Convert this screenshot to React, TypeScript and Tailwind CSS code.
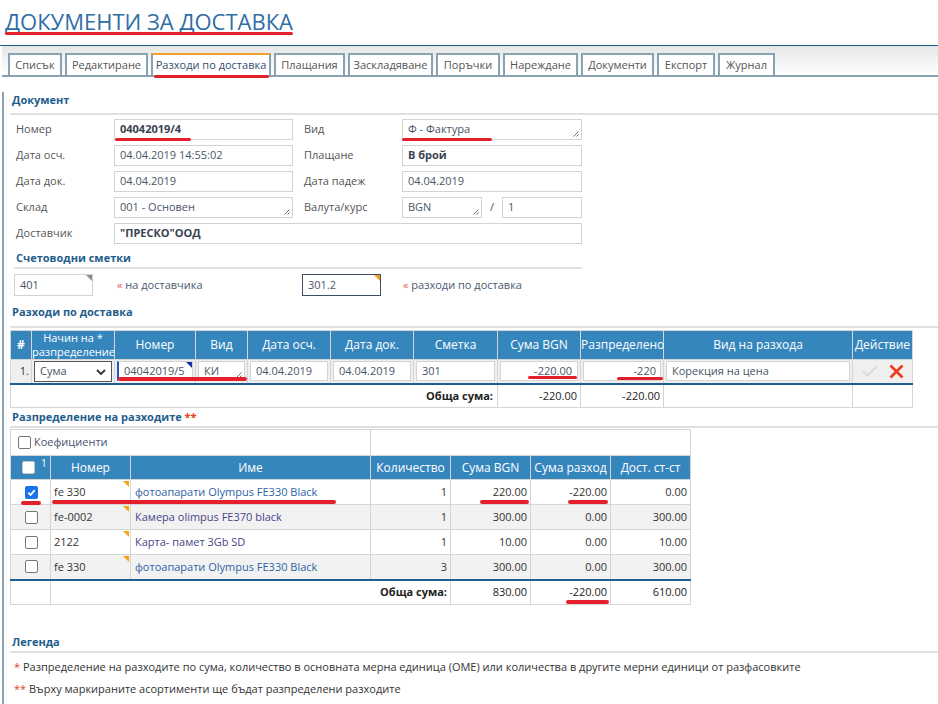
import React from 'react';
import clsx from 'clsx';
import { twMerge } from 'tailwind-merge';

const cx = (...a: (string | false | undefined)[]) => twMerge(clsx(a));

const Grip = () => (
  <svg className="absolute bottom-[2px] right-[2px]" width="7" height="7" viewBox="0 0 7 7">
    <path d="M6.5 1.5L1.5 6.5M6.5 4.5L4.5 6.5" stroke="#6b6b6b" strokeWidth="1" />
  </svg>
);

const Corner = ({ className }: { className: string }) => (
  <span
    className={cx(
      'absolute right-0 top-0 h-0 w-0 border-l-[6px] border-t-[6px] border-l-transparent',
      className,
    )}
  />
);

type FieldProps = {
  children?: React.ReactNode;
  className?: string;
  bold?: boolean;
  grip?: boolean;
  right?: boolean;
  corner?: string;
};

const Field = ({ children, className, bold, grip, right, corner }: FieldProps) => (
  <div
    className={cx(
      'relative flex h-[21px] items-center whitespace-nowrap border border-[#d3d3d3] bg-white px-[5px] text-[#4a5568]',
      right && 'justify-end',
      bold && 'font-bold text-[#3a4250]',
      className,
    )}
  >
    {children}
    {grip && <Grip />}
    {corner && <Corner className={corner} />}
  </div>
);

const Heading = ({ children, className }: { children: React.ReactNode; className?: string }) => (
  <div
    className={cx(
      'border-b-2 border-[#e0e0e0] pl-[2px] text-[11px] font-bold leading-[16px] text-[#1f5d8c]',
      className,
    )}
  >
    {children}
  </div>
);

const Label = ({ children }: { children: React.ReactNode }) => (
  <div className="w-[98px] shrink-0 text-[#555]">{children}</div>
);

const Box = ({ checked = false }: { checked?: boolean }) =>
  checked ? (
    <span className="inline-flex h-[13px] w-[13px] shrink-0 items-center justify-center rounded-[2px] bg-[#1a73e8]">
      <svg width="9" height="9" viewBox="0 0 10 10">
        <path d="M1.5 5.2L4 7.7L8.6 2.4" stroke="white" strokeWidth="1.9" fill="none" />
      </svg>
    </span>
  ) : (
    <span className="inline-block h-[13px] w-[13px] shrink-0 rounded-[2px] border border-[#767676] bg-white" />
  );

const tabs: [string, string][] = [
  ['Списък', 'w-[54px]'],
  ['Редактиране', 'w-[83px]'],
  ['Разходи по доставка', 'w-[120px]'],
  ['Плащания', 'w-[71px]'],
  ['Заскладяване', 'w-[85px]'],
  ['Поръчки', 'w-[64px]'],
  ['Нареждане', 'w-[75px]'],
  ['Документи', 'w-[73px]'],
  ['Експорт', 'w-[58px]'],
  ['Журнал', 'w-[57px]'],
];

const th = 'border border-[#d5d5d5] bg-[#3686be] p-0 text-center text-[12px] font-normal text-white';
const td = 'border border-[#d5d5d5] p-0';

const items = [
  { c: true, n: 'fe 330', name: 'фотоапарати Olympus FE330 Black', q: '1', s: '220.00', r: '-220.00', d: '0.00', link: 'text-[#2f62a6]' },
  { c: false, n: 'fe-0002', name: 'Камера olimpus FE370 black', q: '1', s: '300.00', r: '0.00', d: '300.00', link: 'text-[#46458a]' },
  { c: false, n: '2122', name: 'Карта- памет 3Gb SD', q: '1', s: '10.00', r: '0.00', d: '10.00', link: 'text-[#4a4586]' },
  { c: false, n: 'fe 330', name: 'фотоапарати Olympus FE330 Black', q: '3', s: '300.00', r: '0.00', d: '300.00', link: 'text-[#2f62a6]' },
];

export default function App() {
  return (
    <div className="relative h-[704px] w-[938px] overflow-hidden bg-white font-['Open_Sans',sans-serif] text-[11px] text-[#444]">
      <div className="h-[46px] border-b border-[#1d5d8b] pl-[5px] pt-[6px]">
        <h1 className="text-[22px] leading-[31px] text-[#2f6ea5]">ДОКУМЕНТИ ЗА ДОСТАВКА</h1>
      </div>

      <div className="ml-[2px]">
        <div className="flex items-end gap-[3px] border-b-2 border-[#8aa3b2] bg-linear-to-b from-[#e6e6e6] to-white pl-[6px] pt-[7px]">
          {tabs.map(([t, w], i) => (
            <div
              key={t}
              className={cx(
                'flex h-[22px] items-center justify-center whitespace-nowrap border-2 border-b-0 border-[#8aa3b2] bg-white text-[#555]',
                w,
                i === 2 && 'border-t-[#f0a02c] text-[#34506e]',
              )}
            >
              {t}
            </div>
          ))}
        </div>

        <div className="border-l-2 border-[#8aa3b2] pb-[20px]">
          <Heading className="ml-[6px] mt-[15px] pb-[5px]">Документ</Heading>

          <div className="mt-[4px] flex flex-col gap-[5px] pl-[12px]">
            <div className="flex h-[21px] items-center">
              <Label>Номер</Label>
              <Field bold className="w-[179px]">04042019/4</Field>
              <div className="w-[11px]" />
              <Label>Вид</Label>
              <Field grip className="w-[180px]">Ф - Фактура</Field>
            </div>
            <div className="flex h-[21px] items-center">
              <Label>Дата осч.</Label>
              <Field className="w-[179px]">04.04.2019 14:55:02</Field>
              <div className="w-[11px]" />
              <Label>Плащане</Label>
              <Field bold className="w-[180px]">В брой</Field>
            </div>
            <div className="flex h-[21px] items-center">
              <Label>Дата док.</Label>
              <Field className="w-[179px]">04.04.2019</Field>
              <div className="w-[11px]" />
              <Label>Дата падеж</Label>
              <Field className="w-[180px]">04.04.2019</Field>
            </div>
            <div className="flex h-[21px] items-center">
              <Label>Склад</Label>
              <Field grip className="w-[179px]">001 - Основен</Field>
              <div className="w-[11px]" />
              <Label>Валута/курс</Label>
              <Field grip className="w-[80px]">BGN</Field>
              <span className="w-[20px] pl-[8px] text-[#555]">/</span>
              <Field className="w-[80px]">1</Field>
            </div>
            <div className="flex h-[21px] items-center">
              <Label>Доставчик</Label>
              <Field bold className="w-[468px]">"ПРЕСКО"ООД</Field>
            </div>
          </div>

          <Heading className="ml-[10px] mt-[6px] w-[568px] pb-[1px]">Счетоводни сметки</Heading>

          <div className="ml-[10px] mt-[5px] flex h-[22px] items-center">
            <Field corner="border-t-[#8c8c8c]" className="h-[22px] w-[79px]">401</Field>
            <span className="ml-[24px] w-[185px] text-[#4a5a70]">
              <span className="text-[#e05a5a]">«</span> на доставчика
            </span>
            <Field corner="border-t-[#f2a225]" className="h-[22px] w-[79px] border-[#3f4f63]">301.2</Field>
            <span className="ml-[22px] text-[#4a5a70]">
              <span className="text-[#e05a5a]">«</span> разходи по доставка
            </span>
          </div>

          <Heading className="ml-[6px] mt-[8px] pb-[6px]">Разходи по доставка</Heading>

          <table className="ml-[6px] mt-[2px] w-[902px] table-fixed border-collapse">
            <colgroup>
              <col className="w-[21px]" />
              <col className="w-[83px]" />
              <col className="w-[81px]" />
              <col className="w-[52px]" />
              <col className="w-[83px]" />
              <col className="w-[83px]" />
              <col className="w-[84px]" />
              <col className="w-[83px]" />
              <col className="w-[83px]" />
              <col className="w-[189px]" />
              <col className="w-[60px]" />
            </colgroup>
            <thead>
              <tr className="h-[28px]">
                <th className={cx(th, 'font-bold')}>#</th>
                <th className={cx(th, 'whitespace-nowrap text-[11px] leading-[14px]')}>
                  <div>Начин на *</div>
                  <div>разпределение</div>
                </th>
                <th className={th}>Номер</th>
                <th className={th}>Вид</th>
                <th className={th}>Дата осч.</th>
                <th className={th}>Дата док.</th>
                <th className={th}>Сметка</th>
                <th className={th}>Сума BGN</th>
                <th className={cx(th, 'whitespace-nowrap')}>Разпределено</th>
                <th className={th}>Вид на разхода</th>
                <th className={th}>Действие</th>
              </tr>
            </thead>
            <tbody>
              <tr className="h-[24px] bg-[#efefef]">
                <td className={cx(td, 'pr-[2px] text-right text-[#333]')}>1.</td>
                <td className={cx(td, 'px-[2px]')}>
                  <div className="relative flex h-[21px] items-center border border-[#555] bg-white pl-[5px] text-[#4a5568]">
                    Сума
                    <svg className="absolute right-[5px] top-[7px]" width="10" height="6" viewBox="0 0 10 6">
                      <path d="M1 1L5 5L9 1" stroke="#333" strokeWidth="1.8" fill="none" />
                    </svg>
                  </div>
                </td>
                <td className={cx(td, 'px-[2px]')}>
                  <Field corner="border-t-[#1b2fa8]" className="h-[20px] border-l-2 border-l-[#2457c5]">
                    04042019/5
                  </Field>
                </td>
                <td className={cx(td, 'px-[2px]')}>
                  <Field grip className="h-[20px]">КИ</Field>
                </td>
                <td className={cx(td, 'px-[2px]')}>
                  <Field className="h-[20px]">04.04.2019</Field>
                </td>
                <td className={cx(td, 'px-[2px]')}>
                  <Field className="h-[20px]">04.04.2019</Field>
                </td>
                <td className={cx(td, 'px-[2px]')}>
                  <Field className="h-[20px]">301</Field>
                </td>
                <td className={cx(td, 'px-[2px]')}>
                  <Field right className="h-[20px]">-220.00</Field>
                </td>
                <td className={cx(td, 'px-[2px]')}>
                  <Field right className="h-[20px] pr-[4px]">-220</Field>
                </td>
                <td className={cx(td, 'px-[2px]')}>
                  <Field className="h-[20px]">Корекция на цена</Field>
                </td>
                <td className={td}>
                  <div className="flex items-center pl-[9px]">
                    <svg width="16" height="12" viewBox="0 0 16 12">
                      <path d="M1 6L5.5 10.5L15 1" stroke="#d6d6d6" strokeWidth="1.6" fill="none" />
                    </svg>
                    <svg className="ml-[11px]" width="15" height="15" viewBox="0 0 15 15">
                      <path d="M1.5 1.5L13.5 13.5M13.5 1.5L1.5 13.5" stroke="#ee3a1c" strokeWidth="2.6" />
                    </svg>
                  </div>
                </td>
              </tr>
              <tr className="h-[24px] bg-white text-[#222]">
                <td colSpan={7} className={cx(td, 'border-t-2 border-t-[#1d5f92] pr-[4px] text-right font-bold')}>
                  Обща сума:
                </td>
                <td className={cx(td, 'border-t-2 border-t-[#1d5f92] pr-[3px] text-right')}>-220.00</td>
                <td className={cx(td, 'border-t-2 border-t-[#1d5f92] pr-[3px] text-right')}>-220.00</td>
                <td className={cx(td, 'border-t-2 border-t-[#1d5f92]')} />
                <td className={cx(td, 'border-t-2 border-t-[#1d5f92]')} />
              </tr>
            </tbody>
          </table>

          <Heading className="ml-[6px] mt-[1px] pb-[1px]">
            Разпределение на разходите <span className="text-[#e8401a]">**</span>
          </Heading>

          <table className="ml-[6px] mt-[1px] w-[680px] table-fixed border-collapse">
            <colgroup>
              <col className="w-[40px]" />
              <col className="w-[80px]" />
              <col className="w-[240px]" />
              <col className="w-[80px]" />
              <col className="w-[80px]" />
              <col className="w-[80px]" />
              <col className="w-[80px]" />
            </colgroup>
            <thead>
              <tr className="h-[26px] bg-white">
                <td colSpan={3} className={cx(td, 'pl-[7px]')}>
                  <div className="flex items-center">
                    <Box />
                    <span className="ml-[3px] text-[#4a5170]">Коефициенти</span>
                  </div>
                </td>
                <td colSpan={4} className={td} />
              </tr>
              <tr className="h-[24px]">
                <th className={th}>
                  <div className="flex items-start pl-[11px]">
                    <span className="inline-block h-[13px] w-[13px] rounded-[2px] border border-[#c8c8c8] bg-white" />
                    <span className="-mt-[3px] ml-[6px] text-[10px] leading-[10px]">1</span>
                  </div>
                </th>
                <th className={th}>Номер</th>
                <th className={th}>Име</th>
                <th className={th}>Количество</th>
                <th className={th}>Сума BGN</th>
                <th className={th}>Сума разход</th>
                <th className={th}>Дост. ст-ст</th>
              </tr>
            </thead>
            <tbody>
              {items.map((it, i) => (
                <tr key={i} className={cx('h-[25px] text-[#333]', i % 2 === 1 ? 'bg-[#f2f2f2]' : 'bg-white')}>
                  <td className={cx(td, 'text-center')}>
                    <div className="flex justify-center pl-[2px]">
                      <Box checked={it.c} />
                    </div>
                  </td>
                  <td className={cx(td, 'relative pl-[3px]')}>
                    {it.n}
                    <span className="absolute right-[1px] top-[1px] h-0 w-0 border-l-[6px] border-t-[6px] border-l-transparent border-t-[#f4a21c]" />
                  </td>
                  <td className={cx(td, 'pl-[4px]', it.link)}>{it.name}</td>
                  <td className={cx(td, 'pr-[3px] text-right')}>{it.q}</td>
                  <td className={cx(td, 'pr-[3px] text-right')}>{it.s}</td>
                  <td className={cx(td, 'pr-[3px] text-right')}>{it.r}</td>
                  <td className={cx(td, 'pr-[3px] text-right')}>{it.d}</td>
                </tr>
              ))}
              <tr className="h-[25px] bg-white text-[#222]">
                <td className={cx(td, 'border-t-2 border-t-[#1d5f92]')} />
                <td colSpan={3} className={cx(td, 'border-t-2 border-t-[#1d5f92] pr-[3px] text-right font-bold')}>
                  Обща сума:
                </td>
                <td className={cx(td, 'border-t-2 border-t-[#1d5f92] pr-[3px] text-right')}>830.00</td>
                <td className={cx(td, 'border-t-2 border-t-[#1d5f92] pr-[3px] text-right')}>-220.00</td>
                <td className={cx(td, 'border-t-2 border-t-[#1d5f92] pr-[3px] text-right')}>610.00</td>
              </tr>
            </tbody>
          </table>

          <Heading className="ml-[6px] mt-[29px] pb-[1px]">Легенда</Heading>
          <div className="mt-[3px] pl-[10px] leading-[22px] text-[#333]">
            <div>
              <span className="text-[#e8401a]">*</span> Разпределение на разходите по сума, количество в основната мерна
              единица (ОМЕ) или количества в другите мерни единици от разфасовките
            </div>
            <div>
              <span className="text-[#e8401a]">**</span> Върху маркираните асортименти ще бъдат разпределени разходите
            </div>
          </div>
        </div>
      </div>

      {/* red annotation marks */}
      <div className="absolute left-[5px] top-[32px] h-[3px] w-[288px] rounded-full bg-[#e3202b]" />
      <div className="absolute left-[154px] top-[75px] h-[3px] w-[115px] rounded-full bg-[#e3202b]" />
      <div className="absolute left-[115px] top-[138px] h-[3px] w-[76px] rounded-full bg-[#e3202b]" />
      <div className="absolute left-[402px] top-[138px] h-[3px] w-[90px] rounded-full bg-[#e3202b]" />
      <div className="absolute left-[118px] top-[377px] h-[4px] w-[129px] rounded-full bg-[#e3202b]" />
      <div className="absolute left-[528px] top-[376px] h-[3px] w-[49px] rounded-full bg-[#e3202b]" />
      <div className="absolute left-[617px] top-[377px] h-[3px] w-[46px] rounded-full bg-[#e3202b]" />
      <div className="absolute left-[21px] top-[501px] h-[4px] w-[20px] rounded-full bg-[#e3202b]" />
      <div className="absolute left-[52px] top-[500px] h-[4px] w-[284px] rounded-full bg-[#e3202b]" />
      <div className="absolute left-[480px] top-[500px] h-[4px] w-[49px] rounded-full bg-[#e3202b]" />
      <div className="absolute left-[568px] top-[500px] h-[4px] w-[40px] rounded-full bg-[#e3202b]" />
      <div className="absolute left-[566px] top-[600px] h-[4px] w-[43px] rounded-full bg-[#e3202b]" />
    </div>
  );
}
